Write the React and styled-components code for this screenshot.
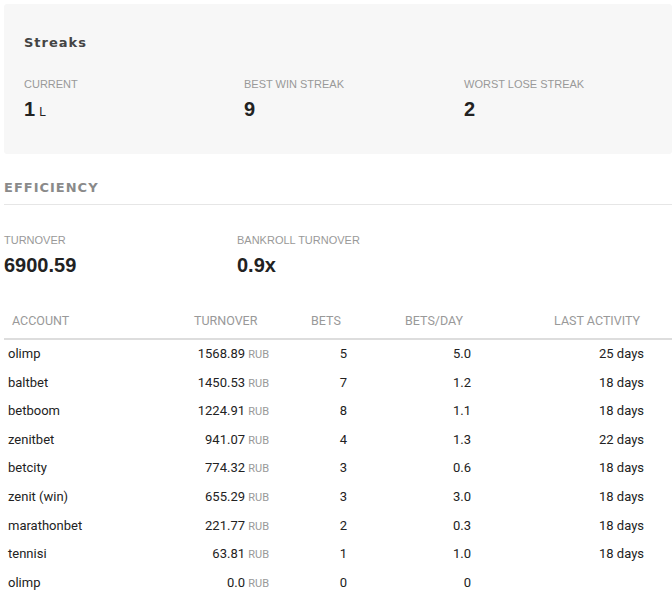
import React from 'react'
import styled, { createGlobalStyle } from 'styled-components'

const Global = createGlobalStyle`
body{margin:0;background:#fff;font-family:"Liberation Sans",Arial,sans-serif;}
`
const Page = styled.div`
padding:4px 0 0 4px;
width:668px;
`
const Panel = styled.div`
background:#f7f7f7;
border-radius:3px;
padding:31px 20px 28px;
height:150px;
box-sizing:border-box;
`
const Title = styled.div`
font-family:"DejaVu Sans",sans-serif;
font-weight:bold;
font-size:13px;
letter-spacing:1px;
color:${p => p.grey ? '#8a8a8a' : '#444'};
`
const Stats = styled.div`
display:grid;
grid-template-columns:${p => p.cols};
margin-top:${p => p.top}px;
`
const Label = styled.div`
font-size:11px;
color:#999;
text-transform:uppercase;
`
const Value = styled.div`
font-size:20px;
font-weight:bold;
color:#222;
margin-top:8px;
small{font-size:12px;font-weight:normal;margin-left:4px;}
`
const Section = styled.div`
margin-top:26px;
padding-bottom:9px;
border-bottom:1px solid #e6e6e6;
`
const Grid = styled.div`
display:grid;
grid-template-columns:186px 85px 80px 124px 1fr;
font-family:Roboto,sans-serif;
font-size:13px;
color:#222;
margin-top:36px;
`
const Head = styled.div`
color:#999;
font-size:12.5px;
padding:0 ${p => p.pr || 0}px 10px ${p => p.pl || 0}px;
text-align:${p => p.right ? 'right' : 'left'};
border-bottom:2px solid #ddd;
`
const Cell = styled.div`
height:28.6px;
line-height:28.6px;
padding:0 ${p => p.pr || 0}px 0 ${p => p.pl || 0}px;
text-align:${p => p.right ? 'right' : 'left'};
white-space:nowrap;
small{font-size:11px;color:#999;}
`

const rows = [
  ['olimp','1568.89',5,'5.0','25 days'],
  ['baltbet','1450.53',7,'1.2','18 days'],
  ['betboom','1224.91',8,'1.1','18 days'],
  ['zenitbet','941.07',4,'1.3','22 days'],
  ['betcity','774.32',3,'0.6','18 days'],
  ['zenit (win)','655.29',3,'3.0','18 days'],
  ['marathonbet','221.77',2,'0.3','18 days'],
  ['tennisi','63.81',1,'1.0','18 days'],
  ['olimp','0.0',0,'0',''],
]

export default function App() {
  return (
    <Page>
      <Global />
      <Panel>
        <Title>Streaks</Title>
        <Stats cols="220px 220px 1fr" top={28}>
          <div><Label>Current</Label><Value>1<small>L</small></Value></div>
          <div><Label>Best win streak</Label><Value>9</Value></div>
          <div><Label>Worst lose streak</Label><Value>2</Value></div>
        </Stats>
      </Panel>
      <Section><Title grey>EFFICIENCY</Title></Section>
      <Stats cols="233px 1fr" top={29}>
        <div><Label>Turnover</Label><Value>6900.59</Value></div>
        <div><Label>Bankroll turnover</Label><Value>0.9x</Value></div>
      </Stats>
      <Grid>
        <Head pl={8}>ACCOUNT</Head>
        <Head pl={4}>TURNOVER</Head>
        <Head pl={36}>BETS</Head>
        <Head pl={50}>BETS/DAY</Head>
        <Head right pr={32}>LAST ACTIVITY</Head>
        {rows.map((r, i) => (
          <React.Fragment key={i}>
            <Cell pl={4}>{r[0]}</Cell>
            <Cell right pr={6}>{r[1]} <small>RUB</small></Cell>
            <Cell right pr={8}>{r[2]}</Cell>
            <Cell right pr={8}>{r[3]}</Cell>
            <Cell right pr={28}>{r[4]}</Cell>
          </React.Fragment>
        ))}
      </Grid>
    </Page>
  )
}
